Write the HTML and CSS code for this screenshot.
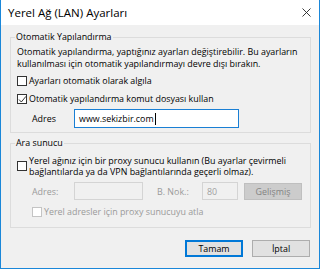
FILE: index.html
```html
<!DOCTYPE html>
<html lang="tr">
<head>
  <meta charset="UTF-8">
  <title>Yerel Ağ (LAN) Ayarları</title>
  <link rel="stylesheet" href="styles.css">
</head>
<body>

  <div class="window">
    <!-- Title bar -->
    <div class="titlebar">
      <span class="title">Yerel Ağ (LAN) Ayarları</span>
      <svg class="close" width="9" height="9" viewBox="0 0 9 9">
        <path d="M0.5 0.5 L8.5 8.5 M8.5 0.5 L0.5 8.5" stroke="#222" stroke-width="0.9" fill="none"/>
      </svg>
    </div>

    <div class="content">
      <!-- Automatic configuration -->
      <fieldset class="group auto">
        <legend>Otomatik Yapılandırma</legend>
        <p class="desc">Otomatik yapılandırma, yaptığınız ayarları değiştirebilir. Bu ayarların<br>kullanılması için otomatik yapılandırmayı devre dışı bırakın.</p>
        <label class="check-row">
          <span class="box"></span>
          <span>Ayarları otomatik olarak algıla</span>
        </label>
        <label class="check-row">
          <span class="box">
            <svg width="9" height="9" viewBox="0 0 9 9"><path d="M1 4.5 L3.3 7 L8 1.3" stroke="#222" stroke-width="0.9" fill="none"/></svg>
          </span>
          <span>Otomatik yapılandırma komut dosyası kullan</span>
        </label>
        <div class="field-row">
          <span class="field-label">Adres</span>
          <div class="input focused">www.sekizbir.com<span class="caret"></span></div>
        </div>
      </fieldset>

      <!-- Proxy server -->
      <fieldset class="group proxy">
        <legend>Ara sunucu</legend>
        <label class="check-row multi">
          <span class="box"></span>
          <span>Yerel ağınız için bir proxy sunucu kullanın (Bu ayarlar çevirmeli<br>bağlantılarda ya da VPN bağlantılarında geçerli olmaz).</span>
        </label>
        <div class="field-row proxy-row">
          <span class="field-label muted">Adres:</span>
          <div class="input disabled host"></div>
          <span class="muted port-label">B. Nok.:</span>
          <div class="input disabled port">80</div>
          <button class="btn advanced">Gelişmiş</button>
        </div>
        <label class="check-row sub">
          <span class="box faint"></span>
          <span class="muted">Yerel adresler için proxy sunucuyu atla</span>
        </label>
      </fieldset>

      <div class="actions">
        <button class="btn default">Tamam</button>
        <button class="btn">İptal</button>
      </div>
    </div>
  </div>

</body>
</html>
```

FILE: styles.css
```css
body {
  margin: 0;
  padding: 0;
  font-family: 'Open Sans', 'Noto Sans', sans-serif;
  font-size: 8.9px;
  color: #000;
  background: #fff;
}

.window {
  width: 320px;
  height: 269px;
  box-sizing: border-box;
  border: 1px solid #1a87d9;
  border-top: none;
  background: #f0f0f0;
  display: flex;
  flex-direction: column;
}

.titlebar {
  height: 25px;
  background: #fff;
  display: flex;
  align-items: center;
  justify-content: space-between;
  padding: 0 8px 0 7px;
  flex-shrink: 0;
}

.title {
  font-size: 11.5px;
}

.content {
  padding: 6px 8px 0 9px;
  display: flex;
  flex-direction: column;
}

.group {
  margin: 0;
  border: 1px solid #dcdcdc;
  padding: 0 6px 0 6px;
  min-width: 0;
  box-sizing: border-box;
}

.group legend {
  padding: 0 1px;
  margin-left: -2px;
  line-height: 12px;
}

.desc {
  margin: 3px 0 2px;
  line-height: 12px;
}

.check-row {
  display: flex;
  align-items: center;
  gap: 2px;
  height: 18px;
  line-height: 12px;
}

.check-row.multi {
  height: auto;
  margin-top: 6px;
  line-height: 11px;
}

.box {
  width: 8px;
  height: 8px;
  border: 1px solid #333;
  background: #fff;
  flex-shrink: 0;
  display: flex;
  align-items: center;
  justify-content: center;
}

.box svg {
  margin: -1px;
}

.box.faint {
  border-color: #c4c4c4;
}

.field-row {
  display: flex;
  align-items: center;
  margin-top: 1px;
}

.field-label {
  width: 42px;
  padding-left: 15px;
  flex-shrink: 0;
}

.input {
  height: 19px;
  box-sizing: border-box;
  border: 1px solid #7a7a7a;
  background: #fff;
  padding: 0 4px;
  display: flex;
  align-items: center;
}

.input.focused {
  width: 165px;
  border-color: #1a7fd4;
}

.caret {
  width: 1px;
  height: 12px;
  background: #000;
  margin-left: 1px;
}

.auto {
  padding-bottom: 4px;
}

.proxy {
  margin-top: 4px;
  padding-bottom: 6px;
}

.proxy-row {
  margin-top: 5px;
}

.muted {
  color: #9a9a9a;
}

.input.disabled {
  height: 18px;
  border-color: #d4d4d4;
  background: #f0f0f0;
  color: #a0a0a0;
}

.input.host {
  width: 69px;
}

.port-label {
  margin-left: 14px;
  width: 45px;
}

.input.port {
  width: 36px;
}

.btn {
  font-family: inherit;
  font-size: 8.9px;
  height: 17px;
  box-sizing: border-box;
  border: 1px solid #adadad;
  background: #e1e1e1;
  color: #000;
  padding: 0;
}

.advanced {
  margin-left: 6px;
  width: 58px;
  border-color: #bfbfbf;
  background: #cccccc;
  color: #838383;
}

.sub {
  margin-top: 3px;
  padding-left: 15px;
}

.actions {
  display: flex;
  justify-content: flex-end;
  gap: 9px;
  margin-top: 12px;
  padding-right: 1px;
}

.actions .btn {
  width: 58px;
}

.btn.default {
  border: 1px solid #0078d7;
  box-shadow: inset 0 0 0 1px #0078d7;
}
```
